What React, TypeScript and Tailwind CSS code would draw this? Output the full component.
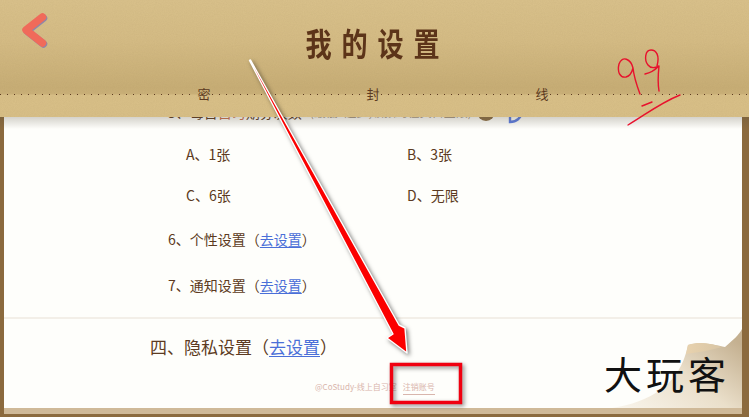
const cjk = "font-['Noto_Sans_CJK_SC','Noto_Sans',sans-serif]";

const DotLine = ({ className }: { className: string }) => (
  <div className={`h-px bg-[linear-gradient(to_right,#5c3a21_1px,transparent_1px)] bg-[length:7px_1px] bg-repeat-x ${className}`} />
);

const GoSet = () => (
  <>
    （<a className="text-[#4a6fd8] underline underline-offset-2">去设置</a>）
  </>
);

export default function App() {
  return (
    <div className={`relative h-[417px] w-[749px] overflow-hidden bg-[#8b6a3e] text-[#5c3a21] ${cjk}`}>
      {/* paper */}
      <div className="ml-1 mr-[7px] h-[414px] border-b-[6px] border-[#cfb998] bg-[#fefefb]">
        <div className="flex flex-col pt-[102px]">
          <div className="flex h-5 items-center pl-[164px] text-[14px]">
            <span>5、每日</span>
            <span className="text-[#c9714f]">自习</span>
            <span>期券次数</span>
            <span className="ml-2 text-[12px] text-[#a89a88]">(最低1起步,领预约在其自主限)</span>
            <div className="ml-[5px] flex h-[18px] w-[18px] items-center justify-center rounded-full bg-[#8a6d45] text-[11px] font-bold text-white">i</div>
            <svg width="16" height="20" viewBox="0 0 16 20" className="ml-[13px] mt-[6px] text-[#5b7be0]">
              <path d="M2 2 L2 17 C8 17 13 13 15 5" fill="none" stroke="currentColor" strokeWidth="2.4" />
            </svg>
          </div>
          <div className="grid grid-cols-[221px_1fr] pl-[182px] pt-[12px] text-[14px]">
            <div className="flex h-[41px] items-center">A、1张</div>
            <div className="flex h-[41px] items-center">B、3张</div>
            <div className="flex h-[41px] items-center">C、6张</div>
            <div className="flex h-[41px] items-center">D、无限</div>
          </div>
          <div className="flex h-[46px] items-center pl-[164px] text-[14px]">
            <span>6、个性设置<GoSet /></span>
          </div>
          <div className="flex h-[46px] items-center pl-[164px] text-[14px]">
            <span>7、通知设置<GoSet /></span>
          </div>
          <div className="mt-[9px] h-[2px] bg-[#f3efe8]" />
          <div className="flex h-[55px] items-center pl-[146px] text-[17px]">
            <span>四、隐私设置<GoSet /></span>
          </div>
          <div className="mt-[6px] flex items-start pl-[311px] text-[8px] leading-[14px] text-[#d9b5ac]">
            <span>@CoStudy-线上自习室</span>
            <span className="ml-[6px] border-b border-[#d8b5ac]">注销账号</span>
          </div>
        </div>
      </div>

      {/* page curl */}
      <svg className="absolute left-0 top-0" width="749" height="417" viewBox="0 0 749 417">
        <defs>
          <linearGradient id="curl" x1="0" y1="1" x2="1" y2="0.2">
            <stop offset="0" stopColor="#faf6ee" />
            <stop offset="0.55" stopColor="#eadfca" />
            <stop offset="1" stopColor="#c4b090" />
          </linearGradient>
          <linearGradient id="curlTop" x1="0" y1="0" x2="1" y2="0">
            <stop offset="0" stopColor="#e8d2ae" />
            <stop offset="1" stopColor="#d8c5a4" />
          </linearGradient>
        </defs>
        <path d="M612 408 C650 402 680 385 688 345 C700 341 715 345 725 347 C733 340 739 335 742 329 L742 408 Z" fill="url(#curl)" />
        <path d="M688 345 C700 341 712 344 722 347 C712 350 700 352 686 354 Z" fill="url(#curlTop)" />
      </svg>
      <div className={`absolute left-[604px] top-[349px] text-[38px] font-normal leading-[48px] tracking-[4px] text-[#111] ${cjk}`}>大玩客</div>

      {/* header */}
      <div className="absolute inset-x-0 top-0 h-[117px] overflow-hidden bg-[linear-gradient(to_bottom,#dac28c_0px,#d6bd86_40px,#c8ae76_88px,#cbb179_94px,#dac189_95px,#d9c088_117px)]">
        <svg className="absolute inset-0 h-full w-full opacity-20" aria-hidden="true">
          <filter id="grain">
            <feTurbulence type="fractalNoise" baseFrequency="0.9" numOctaves="2" />
            <feColorMatrix values="0 0 0 0 0.35 0 0 0 0 0.25 0 0 0 0 0.1 0 0 0 0.7 0" />
          </filter>
          <rect width="100%" height="100%" filter="url(#grain)" />
        </svg>
        <div className="relative flex h-[84px] items-center justify-center pt-[1px]">
          <span className="scale-x-90 scale-y-110 pl-[8px] text-[29px] font-bold leading-none tracking-[11px] text-[#5c3419]">我的设置</span>
        </div>
        <div className="relative flex h-5 items-center text-[13px] leading-5">
          <DotLine className="w-[196px]" />
          <span className="w-4 text-center">密</span>
          <DotLine className="w-[153px]" />
          <span className="w-4 text-center">封</span>
          <DotLine className="w-[153px]" />
          <span className="w-4 text-center">线</span>
          <DotLine className="flex-1" />
        </div>
      </div>
      <div className="absolute inset-x-0 top-[117px] h-3 bg-[linear-gradient(to_bottom,rgba(90,80,60,0.25),rgba(90,80,60,0))]" />

      {/* back arrow */}
      <svg className="absolute left-[18px] top-[10px]" width="32" height="40" viewBox="0 0 32 40">
        <polyline points="24.5,7 8,20 24.5,33" fill="none" stroke="#8f86a8" strokeWidth="7.5" strokeLinecap="round" strokeLinejoin="round" transform="translate(1 1)" />
        <polyline points="24.5,7 8,20 24.5,33" fill="none" stroke="#f06a5a" strokeWidth="7.5" strokeLinecap="round" strokeLinejoin="round" />
      </svg>

      {/* annotations */}
      <svg className="pointer-events-none absolute left-0 top-0" width="749" height="417" viewBox="0 0 749 417">
        <g fill="none" stroke="#e8112d" strokeWidth="1.4" strokeLinecap="round" strokeLinejoin="round">
          <path d="M633 68 C631 59 622 55 619 64 C617 72 620 78 626 77 C630 76 632 72 633 68 C634 78 637 86 640 94" />
          <path d="M657 66 C660 55 656 50 651 50 C645 50 644 60 648 65 C651 69 655 68 659 66 C658 75 658 85 659 91 M645 74 C650 73 655 70 659 66" />
          <path d="M642 106 L652 102" />
          <path d="M628 125 C645 115 660 103 680 95" />
        </g>
        <rect x="391.5" y="364.5" width="69" height="38" fill="none" stroke="#f00010" strokeWidth="3.5" className="drop-shadow-[2px_2px_2px_rgba(0,0,0,0.45)]" />
        <polygon
          points="249.5,60.5 250.5,60 399,325 405,328 407,353 387,338 393,334"
          fill="#fb0000"
          stroke="#ffffff"
          strokeWidth="1.4"
          strokeLinejoin="round"
          className="drop-shadow-[2px_2px_2px_rgba(0,0,0,0.5)]"
        />
      </svg>
    </div>
  );
}
